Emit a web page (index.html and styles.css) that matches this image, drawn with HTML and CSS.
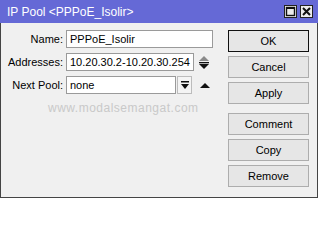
FILE: index.html
```html
<!DOCTYPE html>
<html>
<head>
<meta charset="utf-8">
<link rel="stylesheet" href="styles.css">
</head>
<body>
<div class="window">
  <div class="titlebar">
    <span class="title">IP Pool &lt;PPPoE_Isolir&gt;</span>
    <div class="tbtns">
      <div class="tbtn"><svg width="11" height="11" viewBox="0 0 11 11"><rect x="1.5" y="1.5" width="8" height="8" fill="none" stroke="#111" stroke-width="1.4"/><rect x="1" y="1" width="9" height="2" fill="#111"/></svg></div>
      <div class="tbtn"><svg width="11" height="11" viewBox="0 0 11 11"><path d="M2 2 L9 9 M9 2 L2 9" stroke="#111" stroke-width="2"/></svg></div>
    </div>
  </div>
  <div class="content">
    <div class="form">
      <div class="row">
        <span class="label">Name:</span>
        <div class="field name">PPPoE_Isolir</div>
      </div>
      <div class="row">
        <span class="label">Addresses:</span>
        <div class="field addr">10.20.30.2-10.20.30.254</div>
        <span class="icon updown"><svg width="10" height="13" viewBox="0 0 10 13"><polygon points="0,5 5,0 10,5" fill="#8a8a8a"/><rect x="0" y="6" width="10" height="1.3" fill="#111"/><polygon points="0,8 10,8 5,13" fill="#111"/></svg></span>
      </div>
      <div class="row">
        <span class="label">Next Pool:</span>
        <div class="field pool">none</div>
        <div class="ddbtn"><svg width="8" height="9" viewBox="0 0 8 9"><rect x="0" y="0" width="8" height="1.5" fill="#111"/><polygon points="0,3 8,3 4,8" fill="#111"/></svg></div>
        <span class="icon up"><svg width="10" height="5" viewBox="0 0 10 5"><polygon points="0,5 5,0 10,5" fill="#111"/></svg></span>
      </div>
      <div class="watermark">www.modalsemangat.com</div>
    </div>
    <div class="buttons">
      <div class="btn default">OK</div>
      <div class="btn">Cancel</div>
      <div class="btn">Apply</div>
      <div class="btn sep">Comment</div>
      <div class="btn">Copy</div>
      <div class="btn">Remove</div>
    </div>
  </div>
</div>
</body>
</html>
```
FILE: styles.css
```css
html, body {
  margin: 0;
  padding: 0;
  background: #ffffff;
}
body {
  font-family: "Liberation Sans", Arial, sans-serif;
  font-size: 11px;
  color: #000;
}
.window {
  width: 318px;
  height: 198px;
  box-sizing: border-box;
  border: 1px solid #444;
  border-top: none;
  background: #f0f0f0;
  display: flex;
  flex-direction: column;
}
.titlebar {
  height: 23px;
  background: #6569d6;
  display: flex;
  align-items: center;
  padding: 0 4px 0 7px;
  color: #fff;
  font-size: 12px;
  margin: 0 -1px;
}
.title {
  flex: 1;
}
.tbtns {
  display: flex;
  gap: 3px;
  margin-right: 1px;
}
.tbtn {
  width: 13px;
  height: 13px;
  box-sizing: border-box;
  border: 1px solid #222;
  background: #ececec;
  display: flex;
  align-items: center;
  justify-content: center;
}
.tbtn svg { display: block; }
.content {
  display: flex;
  flex: 1;
  padding-top: 7px;
}
.form {
  width: 219px;
  display: flex;
  flex-direction: column;
  gap: 5px;
}
.row {
  display: flex;
  align-items: center;
  height: 18px;
}
.label {
  width: 62px;
  text-align: right;
  margin-right: 3px;
  flex: none;
}
.field {
  height: 18px;
  box-sizing: border-box;
  border: 1px solid #9a9a9a;
  background: #fff;
  padding: 0 3px;
  line-height: 16px;
  white-space: nowrap;
  overflow: hidden;
}
.field.name { width: 147px; }
.field.addr { width: 128px; }
.field.pool { width: 110px; }
.ddbtn {
  width: 15px;
  height: 18px;
  box-sizing: border-box;
  border: 1px solid #bcbcbc;
  background: #f4f4f4;
  margin-left: 1px;
  display: flex;
  align-items: center;
  justify-content: center;
}
.ddbtn svg { display: block; }
.icon {
  display: flex;
  align-items: center;
}
.icon svg { display: block; }
.updown { margin-left: 5px; }
.up { margin-left: 8px; }
.watermark {
  margin-top: 2px;
  padding-left: 47px;
  color: #c9c9c9;
  font-size: 12px;
  letter-spacing: 0.5px;
}
.buttons {
  width: 81px;
  margin-left: 8px;
  display: flex;
  flex-direction: column;
  gap: 4px;
}
.btn {
  height: 22px;
  box-sizing: border-box;
  border: 1px solid #adadad;
  background: #e6e6e6;
  display: flex;
  align-items: center;
  justify-content: center;
}
.btn.default {
  border: 1px solid #111;
}
.btn.sep {
  margin-top: 5px;
}
```
